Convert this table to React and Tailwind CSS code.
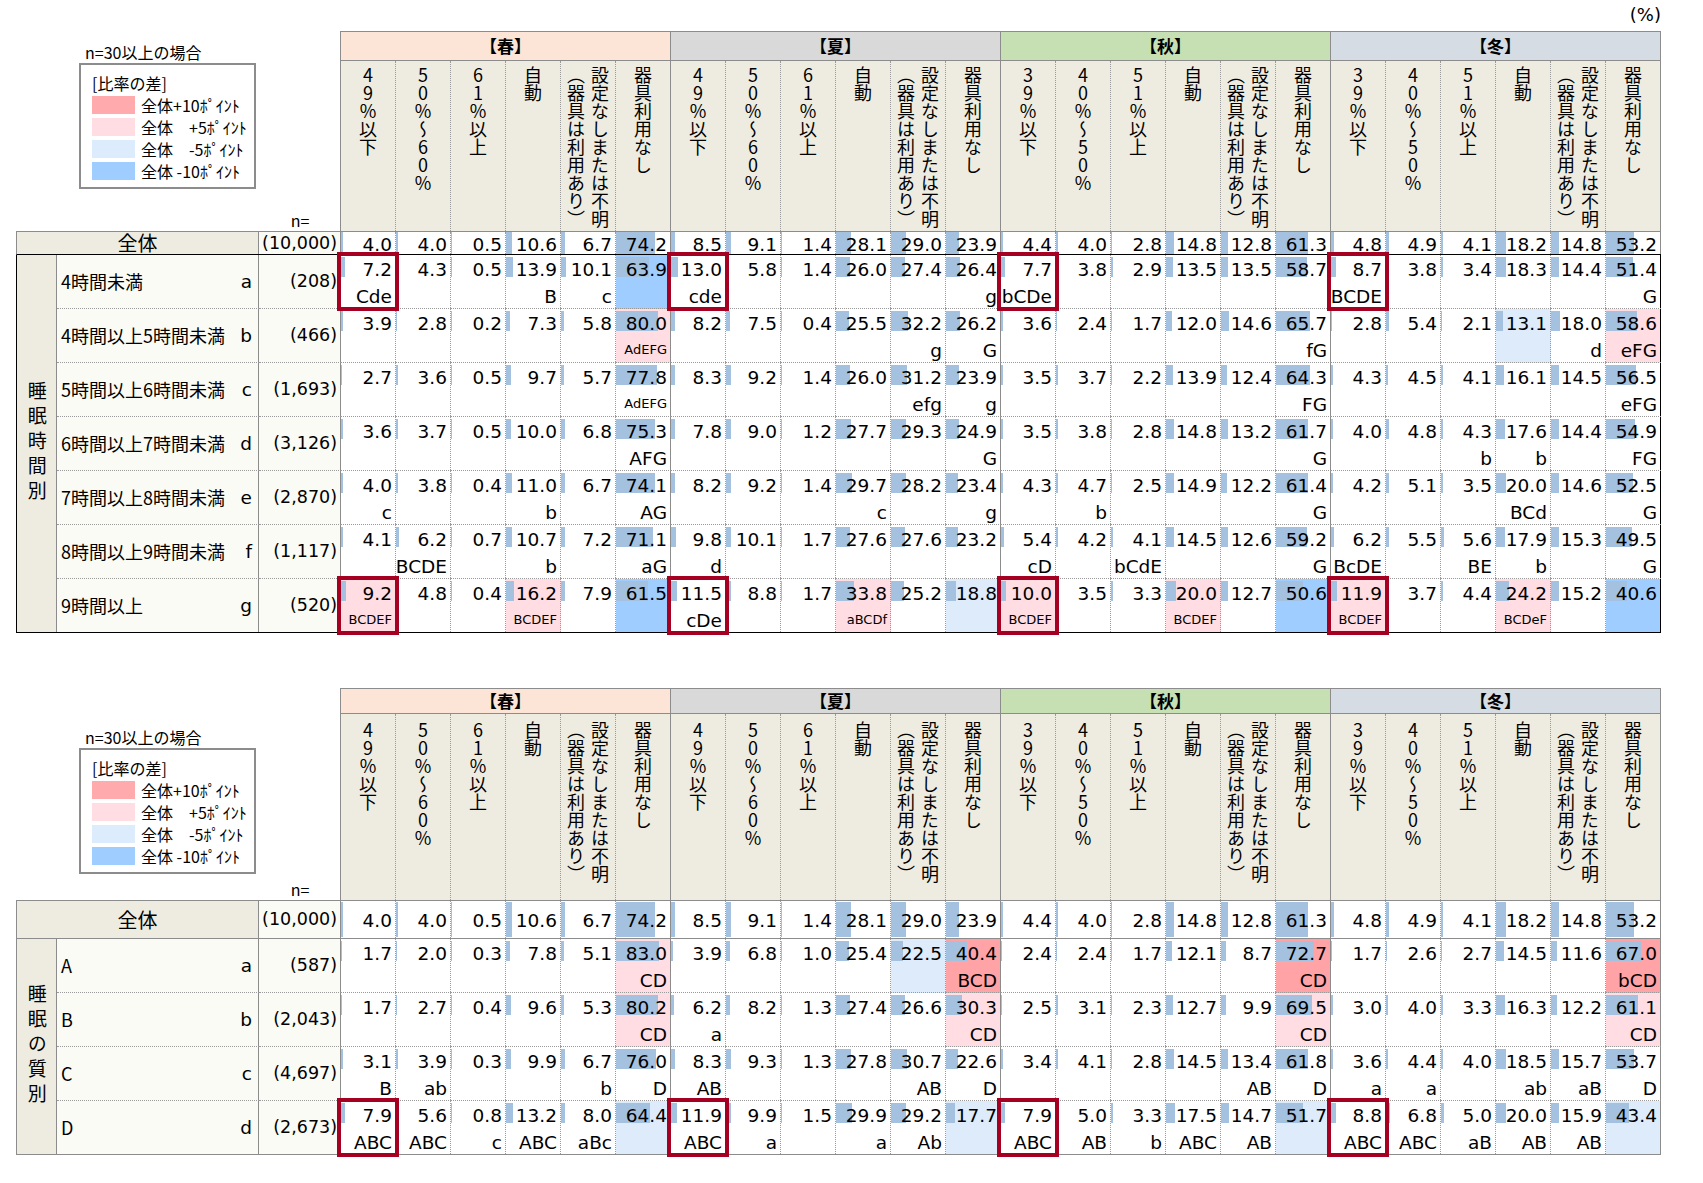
import React from 'react';

// 睡眠時間別 / 睡眠の質別 クロス集計表（季節×エアコン設定）

const NUM = "font-['DejaVu_Sans','Liberation_Sans',sans-serif]";
const JP = "font-['Noto_Sans_CJK_JP','Noto_Sans',sans-serif]";

const DOT_B = 'border-b border-dotted border-[#9a9a9a]';
const GRAY_B = 'border-b border-solid border-[#8c8c8c]';
const BLACK_B = 'border-b border-solid border-black';
const DOT_R = 'border-r border-dotted border-[#9a9a9a]';
const GRAY_R = 'border-r border-solid border-[#8c8c8c]';
const BLACK_R = 'border-r border-solid border-black';

const SEASONS = [
  { name: '【春】', bg: 'bg-[#fce4d6]', cols: ['49%以下', '50%～60%', '61%以上'] },
  { name: '【夏】', bg: 'bg-[#d9d9d9]', cols: ['49%以下', '50%～60%', '61%以上'] },
  { name: '【秋】', bg: 'bg-[#c6e0b4]', cols: ['39%以下', '40%～50%', '51%以上'] },
  { name: '【冬】', bg: 'bg-[#d6dce4]', cols: ['39%以下', '40%～50%', '51%以上'] },
];
const TAIL = [['自動'], ['設定なしまたは不明', '（器具は利用あり）'], ['器具利用なし']];
const HEADS = SEASONS.flatMap((s) => [...s.cols.map((c) => [c]), ...TAIL]);

const TOTAL = '4.0 4.0 0.5 10.6 6.7 74.2 8.5 9.1 1.4 28.1 29.0 23.9 4.4 4.0 2.8 14.8 12.8 61.3 4.8 4.9 4.1 18.2 14.8 53.2'.split(' ');

const BG = { P: 'bg-[#ffa3a6]', p: 'bg-[#ffdde2]', q: 'bg-[#ddebfb]', Q: 'bg-[#9fcdff]' };

const TOP_ROWS = [
  { label: '4時間未満', key: 'a', n: '(208)', cells: '7.2|Cde|x 4.3 0.5 13.9|B 10.1|c 63.9||Q 13.0|cde|x 5.8 1.4 26.0 27.4 26.4|g 7.7|bCDe|x 3.8 2.9 13.5 13.5 58.7 8.7|BCDE|x 3.8 3.4 18.3 14.4 51.4|G' },
  { label: '4時間以上5時間未満', key: 'b', n: '(466)', cells: '3.9 2.8 0.2 7.3 5.8 80.0|AdEFG|p 8.2 7.5 0.4 25.5 32.2|g 26.2|G 3.6 2.4 1.7 12.0 14.6 65.7|fG 2.8 5.4 2.1 13.1||q 18.0|d 58.6|eFG|p' },
  { label: '5時間以上6時間未満', key: 'c', n: '(1,693)', cells: '2.7 3.6 0.5 9.7 5.7 77.8|AdEFG 8.3 9.2 1.4 26.0 31.2|efg 23.9|g 3.5 3.7 2.2 13.9 12.4 64.3|FG 4.3 4.5 4.1 16.1 14.5 56.5|eFG' },
  { label: '6時間以上7時間未満', key: 'd', n: '(3,126)', cells: '3.6 3.7 0.5 10.0 6.8 75.3|AFG 7.8 9.0 1.2 27.7 29.3 24.9|G 3.5 3.8 2.8 14.8 13.2 61.7|G 4.0 4.8 4.3|b 17.6|b 14.4 54.9|FG' },
  { label: '7時間以上8時間未満', key: 'e', n: '(2,870)', cells: '4.0|c 3.8 0.4 11.0|b 6.7 74.1|AG 8.2 9.2 1.4 29.7|c 28.2 23.4|g 4.3 4.7|b 2.5 14.9 12.2 61.4|G 4.2 5.1 3.5 20.0|BCd 14.6 52.5|G' },
  { label: '8時間以上9時間未満', key: 'f', n: '(1,117)', cells: '4.1 6.2|BCDE 0.7 10.7|b 7.2 71.1|aG 9.8|d 10.1 1.7 27.6 27.6 23.2 5.4|cD 4.2 4.1|bCdE 14.5 12.6 59.2|G 6.2|BcDE 5.5 5.6|BE 17.9|b 15.3 49.5|G' },
  { label: '9時間以上', key: 'g', n: '(520)', cells: '9.2|BCDEF|px 4.8 0.4 16.2|BCDEF|p 7.9 61.5||Q 11.5|cDe|x 8.8 1.7 33.8|aBCDf|p 25.2 18.8||q 10.0|BCDEF|px 3.5 3.3 20.0|BCDEF|p 12.7 50.6||Q 11.9|BCDEF|px 3.7 4.4 24.2|BCDeF|p 15.2 40.6||Q' },
];

const BOTTOM_ROWS = [
  { label: 'A', key: 'a', n: '(587)', cells: '1.7 2.0 0.3 7.8 5.1 83.0|CD|p 3.9 6.8 1.0 25.4 22.5||q 40.4|BCD|P 2.4 2.4 1.7 12.1 8.7 72.7|CD|P 1.7 2.6 2.7 14.5 11.6 67.0|bCD|P' },
  { label: 'B', key: 'b', n: '(2,043)', cells: '1.7 2.7 0.4 9.6 5.3 80.2|CD|p 6.2|a 8.2 1.3 27.4 26.6 30.3|CD|p 2.5 3.1 2.3 12.7 9.9 69.5|CD|p 3.0 4.0 3.3 16.3 12.2 61.1|CD|p' },
  { label: 'C', key: 'c', n: '(4,697)', cells: '3.1|B 3.9|ab 0.3 9.9 6.7|b 76.0|D 8.3|AB 9.3 1.3 27.8 30.7|AB 22.6|D 3.4 4.1 2.8 14.5 13.4|AB 61.8|D 3.6|a 4.4|a 4.0 18.5|ab 15.7|aB 53.7|D' },
  { label: 'D', key: 'd', n: '(2,673)', cells: '7.9|ABC|x 5.6|ABC 0.8|c 13.2|ABC 8.0|aBc 64.4||q 11.9|ABC|x 9.9|a 1.5 29.9|a 29.2|Ab 17.7||q 7.9|ABC|x 5.0|AB 3.3|b 17.5|ABC 14.7|AB 51.7||q 8.8|ABC|x 6.8|ABC 5.0|aB 20.0|AB 15.9|AB 43.4||q' },
];

const parse = (s) => {
  const [v, l = '', f = ''] = s.split('|');
  const k = [...f].find((c) => BG[c]);
  return { v, l, bg: k ? BG[k] : '', box: f.includes('x') };
};

const colLine = (j, edge) => (j === 23 ? edge : j % 6 === 5 ? GRAY_R : DOT_R);

const Legend = ({ titleGap }) => (
  <div className="col-span-3 row-span-2 border-b border-solid border-[#8c8c8c]">
    <div className={`h-full ${GRAY_R} flex flex-col ${JP}`}>
      <div className={`${titleGap} ml-[69px] text-[16px] leading-[20px]`}>n=30以上の場合</div>
      <div className="mt-[1px] ml-[63px] w-[177px] h-[126px] border-2 border-solid border-[#8c8c8c] pl-[11px] pt-[8px] text-[16px]">
        <div className="leading-[20px]">[比率の差]</div>
        <div className="mt-[3px] flex flex-col gap-[4px]">
          {[
            ['bg-[#ffaaad]', '全体+10ﾎﾟｲﾝﾄ'],
            ['bg-[#ffdde2]', '全体　+5ﾎﾟｲﾝﾄ'],
            ['bg-[#ddecfd]', '全体　-5ﾎﾟｲﾝﾄ'],
            ['bg-[#9fcdff]', '全体 -10ﾎﾟｲﾝﾄ'],
          ].map(([c, t]) => (
            <div key={t} className="flex items-center gap-[6px] h-[18px]">
              <div className={`w-[43px] h-[18px] ${c}`} />
              <span className="leading-[18px] whitespace-pre">{t}</span>
            </div>
          ))}
        </div>
      </div>
      <div className="mt-auto ml-[243px] w-[82px] text-center text-[16px] leading-[20px] pb-[1px]">n=</div>
    </div>
  </div>
);

const SeasonCell = ({ s }) => (
  <div className={`col-span-6 border-y border-solid border-[#8c8c8c] ${s.bg}`}>
    <div className={`h-full ${GRAY_R} flex items-center justify-center font-bold text-[17px] ${JP}`}>{s.name}</div>
  </div>
);

const HeadCell = ({ lines, j, pad }) => (
  <div className={`bg-[#eeece1] ${GRAY_B}`}>
    <div className={`h-full ${colLine(j, GRAY_R)} flex justify-center ${pad}`}>
      <div className={`[writing-mode:vertical-rl] [text-orientation:upright] whitespace-nowrap text-[18px] leading-[24px] ${JP}`}>
        {lines.map((t, i) => (
          <React.Fragment key={i}>
            {i > 0 && <br />}
            {t}
          </React.Fragment>
        ))}
      </div>
    </div>
  </div>
);

const TotalCell = ({ v, j, rowLine, tall }) => (
  <div className={rowLine}>
    <div className={`relative h-full ${colLine(j, GRAY_R)} flex items-end justify-end pr-[3px] ${tall ? 'pb-[7px]' : 'pb-0'}`}>
      <div className={`absolute left-0 ${tall ? 'top-[1px] bottom-[1px]' : 'top-0 bottom-0'} bg-[#a4c2e0]`} style={{ width: `${parseFloat(v) * 0.97}%` }} />
      <span className={`relative text-[18.5px] ${tall ? 'leading-[20px]' : 'leading-[19px]'}`}>{v}</span>
    </div>
  </div>
);

const DataCell = ({ s, j, rowLine, edge }) => {
  const { v, l, bg, box } = parse(s);
  const small = l.length >= 5;
  return (
    <div className={`relative ${rowLine} ${bg}`}>
      <div className={`h-full ${colLine(j, edge)} flex flex-col`}>
        <div className="relative h-[25px] flex items-end justify-end pr-[3px]">
          <div className="absolute left-0 top-[2px] h-[20px] bg-[#a4c2e0]" style={{ width: `${parseFloat(v) * 0.97}%` }} />
          <span className="relative text-[18.5px] leading-[20px]">{v}</span>
        </div>
        {small ? (
          <div className="flex-1 flex items-end justify-end pr-[3px] pb-[4px] text-[13px] leading-[16px]">{l}</div>
        ) : (
          <div className="flex-1 flex items-end justify-end pr-[3px] pb-[1px] text-[18.5px] leading-[20px]">{l}</div>
        )}
      </div>
      {box && <div className="absolute -top-[3px] -bottom-[3px] -left-[4px] -right-[3px] border-[4px] border-solid border-[#a50021] z-10" />}
    </div>
  );
};

const CrossTable = ({ top, group, rows }) => {
  const outB = top ? BLACK_B : GRAY_B;
  const edge = top ? BLACK_R : GRAY_R;
  return (
    <div
      className={
        top
          ? `grid grid-cols-[41px_202px_82px_repeat(24,55px)] grid-rows-[30px_171px_23px_repeat(7,54px)] ${NUM}`
          : `grid grid-cols-[41px_202px_82px_repeat(24,55px)] grid-rows-[26px_187px_38px_repeat(4,54px)] ${NUM}`
      }
    >
      <Legend titleGap={top ? 'mt-[11px]' : 'mt-[39px]'} />
      {SEASONS.map((s) => (
        <SeasonCell key={s.name} s={s} />
      ))}
      {HEADS.map((h, j) => (
        <HeadCell key={j} lines={h} j={j} pad={top ? 'pt-[5px]' : 'pt-[7px]'} />
      ))}

      {/* 全体 */}
      <div
        className={
          top
            ? 'col-span-2 bg-[#eeece1] border-l border-b border-solid border-l-[#8c8c8c] border-b-black'
            : 'col-span-2 bg-[#eeece1] border-l border-b border-solid border-[#8c8c8c]'
        }
      >
        <div className={`h-full ${GRAY_R} flex items-center justify-center text-[20px] ${JP}`}>全体</div>
      </div>
      <div className={`bg-[#fbfbf5] ${outB}`}>
        <div className={`h-full ${GRAY_R} flex items-center justify-end pr-[3px] text-[17.5px]`}>(10,000)</div>
      </div>
      {TOTAL.map((v, j) => (
        <TotalCell key={j} v={v} j={j} rowLine={outB} tall={!top} />
      ))}

      {/* 属性別 */}
      {rows.map((r, i) => {
        const last = i === rows.length - 1;
        const rowLine = last ? outB : DOT_B;
        return (
          <React.Fragment key={r.key}>
            {i === 0 && (
              <div
                className={
                  top
                    ? 'row-span-7 bg-[#eeece1] border-l border-b border-solid border-black'
                    : 'row-span-4 bg-[#eeece1] border-l border-b border-solid border-[#8c8c8c]'
                }
              >
                <div className={`h-full ${GRAY_R} flex items-center justify-center`}>
                  <div className={`[writing-mode:vertical-rl] [text-orientation:upright] tracking-[6px] text-[19px] ${JP}`}>{group}</div>
                </div>
              </div>
            )}
            <div className={`bg-[#fbfbf5] ${rowLine}`}>
              <div className={`h-full ${GRAY_R} flex items-center justify-between pl-[4px] pr-[6px]`}>
                <span className={`text-[18px] ${JP}`}>{r.label}</span>
                <span className="text-[18.5px]">{r.key}</span>
              </div>
            </div>
            <div className={`bg-[#fbfbf5] ${rowLine}`}>
              <div className={`h-full ${GRAY_R} flex items-center justify-end pr-[3px] text-[17.5px]`}>{r.n}</div>
            </div>
            {r.cells.split(' ').map((s, j) => (
              <DataCell key={j} s={s} j={j} rowLine={rowLine} edge={edge} />
            ))}
          </React.Fragment>
        );
      })}
    </div>
  );
};

export default function App() {
  return (
    <div className={`w-[1703px] h-[1183px] bg-white text-black pl-[16px] ${NUM}`}>
      <div className="w-[1645px] h-[31px] pt-[5px] text-right text-[18px] leading-[20px]">(%)</div>
      <CrossTable top group="睡眠時間別" rows={TOP_ROWS} />
      <div className="h-[55px]" />
      <CrossTable top={false} group="睡眠の質別" rows={BOTTOM_ROWS} />
    </div>
  );
}
